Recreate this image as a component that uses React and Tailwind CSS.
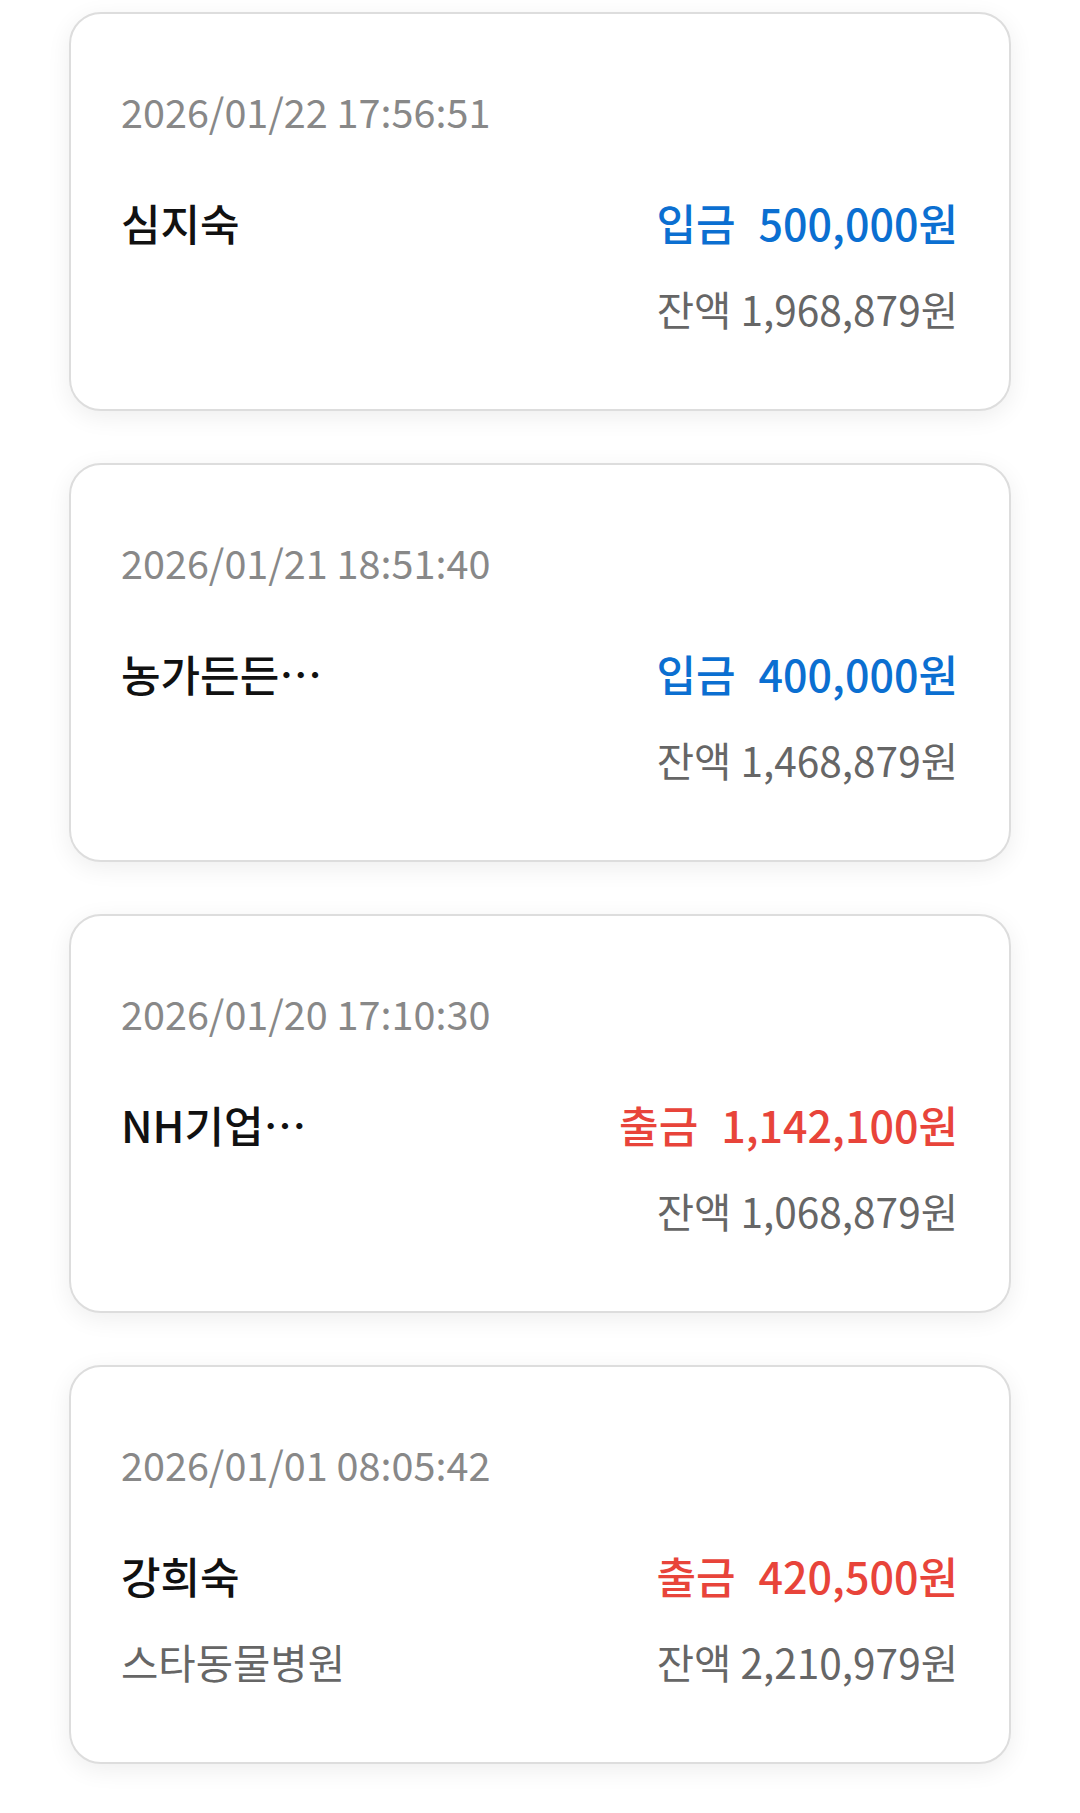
import React from "react";

const items = [
  {
    date: "2026/01/22 17:56:51",
    name: "심지숙",
    type: "입금",
    amount: "500,000원",
    balance: "잔액 1,968,879원",
  },
  {
    date: "2026/01/21 18:51:40",
    name: "농가든든…",
    type: "입금",
    amount: "400,000원",
    balance: "잔액 1,468,879원",
  },
  {
    date: "2026/01/20 17:10:30",
    name: "NH기업…",
    type: "출금",
    amount: "1,142,100원",
    balance: "잔액 1,068,879원",
  },
  {
    date: "2026/01/01 08:05:42",
    name: "강희숙",
    memo: "스타동물병원",
    type: "출금",
    amount: "420,500원",
    balance: "잔액 2,210,979원",
  },
];

const TxCard = ({ item }) => {
  const isIn = item.type === "입금";
  return (
    <div className="flex flex-col rounded-[32px] border-2 border-[#dddddd] bg-white pl-[50px] pr-[51px] pt-[68px] pb-[74px] shadow-[0_6px_24px_rgba(0,0,0,0.07)]">
      <div className="text-[39.6px] leading-[58px] text-[#888888]">{item.date}</div>
      <div className="mt-[54px] flex items-center justify-between">
        <div className="text-[43px] font-medium leading-[56px] text-[#111111]">{item.name}</div>
        <div
          className={
            isIn
              ? "flex gap-[23px] text-[43px] font-medium leading-[56px] text-[#0b6fd1]"
              : "flex gap-[23px] text-[43px] font-medium leading-[56px] text-[#e8443a]"
          }
        >
          <span>{item.type}</span>
          <span>{item.amount}</span>
        </div>
      </div>
      <div className="mt-[33px] flex items-center justify-between text-[40.6px] leading-[52px] text-[#666666]">
        <div>{item.memo || ""}</div>
        <div>{item.balance}</div>
      </div>
    </div>
  );
};

export default function App() {
  return (
    <div
      className="min-h-[1813px] bg-white px-[69px] pt-[12px] pb-[48px]"
      style={{ fontFamily: "'Noto Sans CJK KR', 'Noto Sans', sans-serif" }}
    >
      <div className="flex flex-col gap-[52px]">
        {items.map((item) => (
          <TxCard key={item.date} item={item} />
        ))}
      </div>
    </div>
  );
}
